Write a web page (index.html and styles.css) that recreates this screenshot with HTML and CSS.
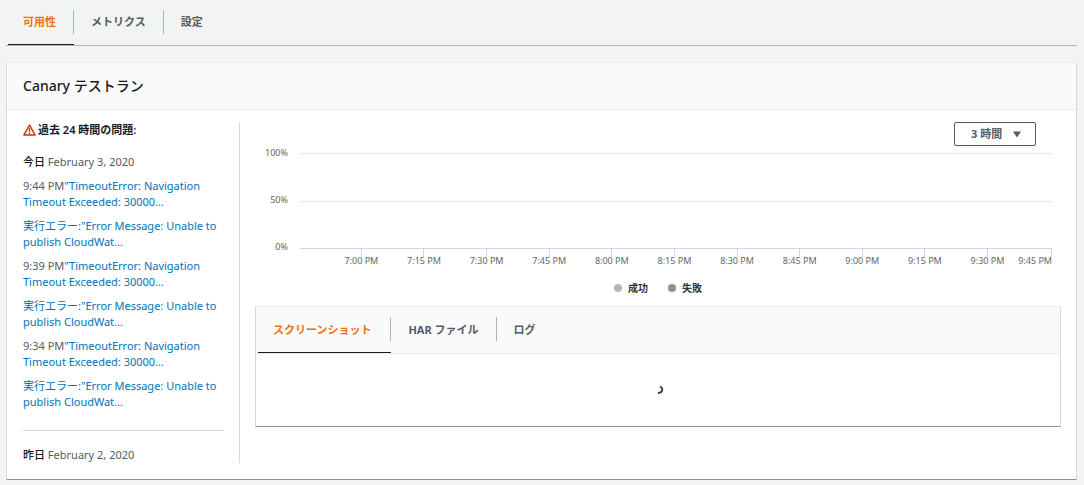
FILE: index.html
```html
<!DOCTYPE html>
<html lang="ja">
<head>
<meta charset="utf-8">
<title>Canary テストラン</title>
<link rel="stylesheet" href="styles.css">
</head>
<body>
<nav class="tabs page-tabs" aria-label="Canary">
  <button class="tab active" type="button">可用性</button>
  <button class="tab" type="button">メトリクス</button>
  <button class="tab" type="button">設定</button>
</nav>
<main class="card">
  <header class="card-header"><h1 class="title">Canary テストラン</h1></header>
  <div class="card-body">
    <aside class="issues">
      <h2 class="issues-title">
        <svg class="warn" viewBox="0 0 14 13" aria-hidden="true"><path d="M7 1.3 13 11.9H1Z" fill="none" stroke="#d13212" stroke-width="1.6" stroke-linejoin="round"/><path d="M7 4.6V8.3M7 9.3V10.7" stroke="#d13212" stroke-width="1.6"/></svg>
        過去 24 時間の問題:
      </h2>
      <section class="day">
        <p class="date"><strong class="day-name">今日</strong> February 3, 2020</p>
        <p class="issue">9:44 PM<a class="link" href="#">"TimeoutError: Navigation Timeout Exceeded: 30000...</a></p>
        <p class="issue"><a class="link" href="#">実行エラー:"Error Message: Unable to publish CloudWat...</a></p>
        <p class="issue">9:39 PM<a class="link" href="#">"TimeoutError: Navigation Timeout Exceeded: 30000...</a></p>
        <p class="issue"><a class="link" href="#">実行エラー:"Error Message: Unable to publish CloudWat...</a></p>
        <p class="issue">9:34 PM<a class="link" href="#">"TimeoutError: Navigation Timeout Exceeded: 30000...</a></p>
        <p class="issue"><a class="link" href="#">実行エラー:"Error Message: Unable to publish CloudWat...</a></p>
      </section>
      <section class="day">
        <p class="date"><strong class="day-name">昨日</strong> February 2, 2020</p>
      </section>
    </aside>
    <div class="detail">
      <div class="toolbar">
        <div class="range">
          <select class="range-select" aria-label="期間"><option>3 時間</option></select>
          <svg class="caret" viewBox="0 0 8 7" aria-hidden="true"><path d="M0 .5H8L4 6.5Z" fill="#545b64"/></svg>
        </div>
      </div>
      <div class="chart">
        <div class="y-axis"><span>100%</span><span>50%</span><span>0%</span></div>
        <div class="plot"><div class="band"></div><div class="band"></div></div>
        <div class="x-axis">
          <span class="tick">7:00 PM</span><span class="tick">7:15 PM</span><span class="tick">7:30 PM</span><span class="tick">7:45 PM</span><span class="tick">8:00 PM</span><span class="tick">8:15 PM</span><span class="tick">8:30 PM</span><span class="tick">8:45 PM</span><span class="tick">9:00 PM</span><span class="tick">9:15 PM</span><span class="tick">9:30 PM</span><span class="tick last">9:45 PM</span>
        </div>
      </div>
      <div class="legend">
        <span class="legend-item"><i class="dot"></i>成功</span>
        <span class="legend-item"><i class="dot failed"></i>失敗</span>
      </div>
      <section class="panel">
        <nav class="tabs panel-tabs" aria-label="詳細">
          <button class="tab active" type="button">スクリーンショット</button>
          <button class="tab" type="button">HAR ファイル</button>
          <button class="tab" type="button">ログ</button>
        </nav>
        <div class="panel-body">
          <svg class="spinner" viewBox="0 0 8 10" role="img" aria-label="読み込み中"><path d="M4 1.5C7.5 3 7 8 2 8" fill="none" stroke="#16191f" stroke-opacity=".85" stroke-width="1.8"/></svg>
        </div>
      </section>
    </div>
  </div>
</main>
</body>
</html>
```

FILE: styles.css
```css
* {
  box-sizing: border-box;
}

body {
  margin: 0;
  padding: 0 7px 5px 6px;
  background: #f2f3f3;
  color: #545b64;
  font-family: "Noto Sans", "Noto Sans CJK JP", sans-serif;
  font-size: 11px;
  line-height: 16px;
}

h1, h2, p {
  margin: 0;
}

button, select {
  font: inherit;
}

.tabs {
  display: flex;
  padding-left: 2px;
}

.page-tabs {
  height: 46px;
  border-bottom: 1px solid #aab7b8;
}

.tab {
  position: relative;
  padding: 0 18px 1px 17px;
  border: 0;
  background: none;
  color: #545b64;
  font-weight: 700;
  white-space: nowrap;
}

.tab:first-child {
  padding-left: 15px;
}

.tab.active {
  color: #ec7211;
}

.tab.active::after {
  content: "";
  position: absolute;
  right: 0;
  bottom: 0;
  left: 0;
  height: 1px;
  background: #16191f;
}

.tab:not(:last-child)::before {
  content: "";
  position: absolute;
  top: 10px;
  right: 0;
  width: 1px;
  height: 24px;
  background: #aab7b8;
}

.card {
  margin-top: 16px;
  border: 1px solid #d5dbdb;
  border-top-color: #eaeded;
  border-bottom-color: #879596;
  background: #fff;
}

.card-header {
  padding: 12px 16px 13px;
  border-bottom: 1px solid #eaeded;
  background: #fafafa;
}

.title {
  color: #16191f;
  font-size: 14px;
  font-weight: 500;
  line-height: 21px;
}

.card-body {
  display: grid;
  grid-template-columns: 217px minmax(0, 1fr);
  gap: 15px;
  padding: 12px 15px 16px 16px;
}

.issues {
  padding-right: 16px;
  border-right: 1px solid #d5dbdb;
}

.issues-title {
  display: flex;
  align-items: center;
  gap: 2px;
  color: #16191f;
  font-size: 11px;
  font-weight: 600;
}

.warn {
  width: 13px;
  height: 12px;
}

.day {
  display: grid;
  gap: 8px;
  padding-top: 16px;
}

.day + .day {
  margin-top: 20px;
  border-top: 1px solid #d5dbdb;
}

.day-name {
  color: #16191f;
  font-weight: 500;
}

.link {
  color: #0073bb;
  text-decoration: none;
}

.toolbar {
  display: flex;
  justify-content: flex-end;
  padding-right: 25px;
}

.range {
  position: relative;
}

.range-select {
  display: block;
  width: 82px;
  height: 24px;
  padding: 0 16px;
  border: 1px solid #545b64;
  border-radius: 2px;
  appearance: none;
  background: #fff;
  color: #545b64;
  font-weight: 700;
}

.caret {
  position: absolute;
  top: 9px;
  right: 15px;
  width: 8px;
  height: 7px;
  pointer-events: none;
}

.chart {
  display: grid;
  grid-template-columns: 33px minmax(0, 1fr);
  column-gap: 12px;
  padding: 7px 9px 0 0;
  color: #666;
  font-size: 9px;
}

.y-axis {
  display: flex;
  flex-direction: column;
  justify-content: space-between;
  height: 110px;
  margin: -8px 0;
  text-align: right;
}

.plot {
  display: grid;
  grid-template-rows: 1fr 1fr;
  height: 96px;
  border-bottom: 1px solid #ccd6eb;
}

.band {
  border-top: 1px solid #e6e6e6;
}

.x-axis {
  display: grid;
  grid-column: 2;
  grid-template-columns: repeat(11, minmax(0, 100fr)) minmax(0, 53fr);
  padding-left: 4%;
}

.tick {
  display: flex;
  flex-direction: column;
  align-items: center;
  white-space: nowrap;
}

.tick::before {
  content: "";
  width: 1px;
  height: 8px;
  margin-bottom: -4px;
  background: #ccd6eb;
}

.tick.last {
  align-items: flex-end;
}

.legend {
  display: flex;
  justify-content: center;
  gap: 20px;
  padding: 11px 0 10px;
  color: #333;
  font-size: 10px;
  font-weight: 700;
}

.legend-item {
  display: flex;
  align-items: center;
  gap: 6px;
}

.dot {
  width: 8px;
  height: 8px;
  border-radius: 50%;
  background: #b5b8b8;
}

.dot.failed {
  background: #909393;
}

.panel {
  border: 1px solid #d5dbdb;
  border-top-color: #eaeded;
  border-bottom-color: #879596;
}

.panel-tabs {
  height: 47px;
  border-bottom: 1px solid #eaeded;
  background: #fafafa;
}

.panel-tabs .tab:first-child {
  padding-right: 20px;
}

.panel-body {
  display: flex;
  align-items: center;
  justify-content: center;
  height: 72px;
  padding-left: 4px;
}

.spinner {
  width: 8px;
  height: 10px;
}
```
